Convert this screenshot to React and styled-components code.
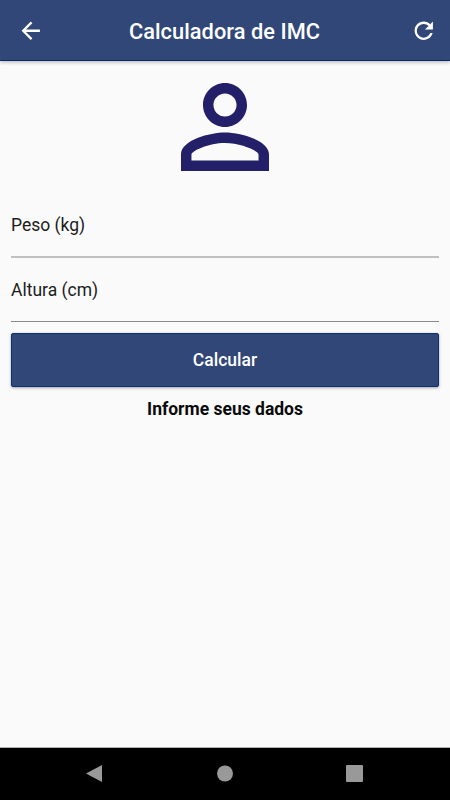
import React, { useState } from "react"
import styled, { createGlobalStyle } from "styled-components"

const GlobalStyle = createGlobalStyle`
  * {
    box-sizing: border-box;
  }
  body {
    margin: 0;
    background: #fafafa;
    font-family: Roboto, sans-serif;
  }
`

const Screen = styled.div`
  display: flex;
  flex-direction: column;
  height: 100vh;
  background: #fafafa;
`

const AppBar = styled.header`
  display: flex;
  align-items: center;
  justify-content: space-between;
  flex: none;
  height: 61px;
  padding: 1px 13px 0 17px;
  background: #304778;
  border-bottom: 1px solid #0b2a6b;
  box-shadow: 0 1px 4px rgba(0, 0, 0, 0.3);
`

const Title = styled.h1`
  margin: 0 5px 0 0;
  padding-top: 2px;
  color: #fff;
  font-size: 21.8px;
  font-weight: 500;
  line-height: 26px;
  letter-spacing: 0.05px;
`

const IconButton = styled.button`
  display: flex;
  padding: 0;
  border: 0;
  background: none;
  color: #fff;
`

const Icon = styled.svg`
  display: block;
  width: ${props => props.$size}px;
  height: ${props => props.$size}px;
  fill: currentColor;
`

const Form = styled.form`
  display: flex;
  flex: 1;
  flex-direction: column;
  padding: 0 11px;
`

const Avatar = styled.div`
  display: flex;
  justify-content: center;
  height: 132px;
  color: #241f69;
`

const Field = styled.input`
  width: 100%;
  height: ${props => props.$height}px;
  padding: 0;
  border: 0;
  border-bottom: ${props => props.$line};
  border-radius: 0;
  outline: 0;
  background: none;
  color: #1c1c1c;
  font-family: inherit;
  font-size: 17.5px;
  font-weight: 400;

  &::placeholder {
    color: #1c1c1c;
    opacity: 1;
  }
`

const SubmitButton = styled.button`
  height: 54px;
  margin-top: 11px;
  padding: 0;
  border: 1px solid #0f2f70;
  border-radius: 2px;
  background: #304778;
  box-shadow: 0 1px 3px rgba(0, 0, 0, 0.35);
  color: #fff;
  font-family: inherit;
  font-size: 17.5px;
  font-weight: 500;
`

const Result = styled.p`
  margin: 11px 0 0;
  color: #0a0a0a;
  font-size: 17.5px;
  font-weight: 700;
  line-height: 22px;
  text-align: center;
`

const NavBar = styled.nav`
  display: flex;
  align-items: center;
  justify-content: space-between;
  flex: none;
  height: 53px;
  padding: 0 87px 2px 86px;
  border-top: 1px solid #b0b0b0;
  background: #000;
  color: #999;
`

function BarButton({ label, path, onClick }) {
  return (
    <IconButton type="button" aria-label={label} onClick={onClick}>
      <Icon $size={27.5} viewBox="0 0 24 24">
        <path d={path} />
      </Icon>
    </IconButton>
  )
}

export default function App() {
  const [weight, setWeight] = useState("")
  const [height, setHeight] = useState("")
  const [result, setResult] = useState("Informe seus dados")

  const reset = () => {
    setWeight("")
    setHeight("")
    setResult("Informe seus dados")
  }

  const calculate = event => {
    event.preventDefault()
    const meters = Number(height) / 100
    if (!Number(weight) || !meters) {
      setResult("Informe seus dados")
      return
    }
    setResult("IMC: " + (Number(weight) / (meters * meters)).toFixed(2))
  }

  return (
    <Screen>
      <GlobalStyle />
      <AppBar>
        <BarButton
          label="Voltar"
          path="M20 11H7.83l5.59-5.59L12 4l-8 8 8 8 1.41-1.41L7.83 13H20v-2z"
        />
        <Title>Calculadora de IMC</Title>
        <BarButton
          label="Recomeçar"
          onClick={reset}
          path="M17.65 6.35C16.2 4.9 14.21 4 12 4c-4.42 0-7.99 3.58-7.99 8s3.57 8 7.99 8c3.73 0 6.84-2.55 7.73-6h-2.08c-.82 2.33-3.04 4-5.65 4-3.31 0-6-2.69-6-6s2.69-6 6-6c1.66 0 3.14.69 4.22 1.78L13 11h7V4l-2.35 2.35z"
        />
      </AppBar>
      <Form onSubmit={calculate}>
        <Avatar>
          <Icon $size={132} viewBox="0 0 24 24">
            <path d="M12 5.9c1.16 0 2.1.94 2.1 2.1s-.94 2.1-2.1 2.1S9.9 9.16 9.9 8s.94-2.1 2.1-2.1m0 9c2.97 0 6.1 1.46 6.1 2.1v1.1H5.9V17c0-.64 3.13-2.1 6.1-2.1M12 4C9.79 4 8 5.79 8 8s1.79 4 4 4 4-1.79 4-4-1.79-4-4-4zm0 9c-2.67 0-8 1.34-8 4v3h16v-3c0-2.66-5.33-4-8-4z" />
          </Icon>
        </Avatar>
        <Field
          $height={65}
          $line="2px solid #c0c0c0"
          placeholder="Peso (kg)"
          value={weight}
          onChange={e => setWeight(e.target.value)}
        />
        <Field
          $height={64}
          $line="1px solid #8a8a8a"
          placeholder="Altura (cm)"
          value={height}
          onChange={e => setHeight(e.target.value)}
        />
        <SubmitButton type="submit">Calcular</SubmitButton>
        <Result>{result}</Result>
      </Form>
      <NavBar>
        <Icon $size={17} viewBox="0 0 17 17">
          <path d="M0 8.5 16 0v17z" />
        </Icon>
        <Icon $size={17} viewBox="0 0 17 17">
          <circle cx="9" cy="8.5" r="8" />
        </Icon>
        <Icon $size={17} viewBox="0 0 17 17">
          <rect width="17" height="17" rx="1" />
        </Icon>
      </NavBar>
    </Screen>
  )
}
